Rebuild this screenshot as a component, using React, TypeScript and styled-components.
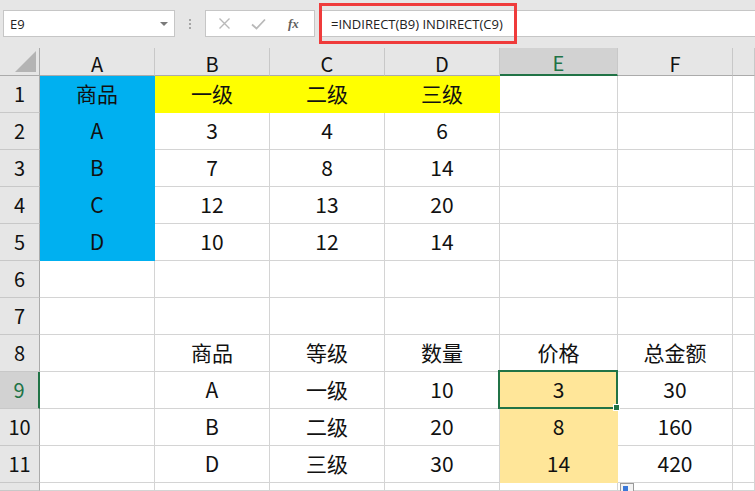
import React from 'react'
import styled, { createGlobalStyle } from 'styled-components'

const GlobalStyle = createGlobalStyle`
  html, body {
    margin: 0;
    padding: 0;
    background: #e6e6e6;
    overflow: hidden;
  }
`

const green = '#217346'
const gridLine = '#d4d4d4'
const cellFont = `"Noto Sans CJK SC", "Liberation Sans", sans-serif`

const Page = styled.div`
  width: 755px;
  height: 491px;
  display: flex;
  flex-direction: column;
  background: #e6e6e6;
  font-family: ${cellFont};
  overflow: hidden;
`

const FormulaBar = styled.div`
  height: 48px;
  display: flex;
  align-items: flex-start;
  padding: 10px 0 0 3px;
  box-sizing: border-box;
`

const NameBox = styled.div`
  width: 172px;
  height: 27px;
  box-sizing: border-box;
  background: #fff;
  border: 1px solid #c6c6c6;
  display: flex;
  align-items: center;
  justify-content: space-between;
  padding: 0 6px 0 6px;
  font-family: "Open Sans", "Liberation Sans", sans-serif;
  font-size: 13px;
  color: #222;
`

const Caret = styled.span`
  width: 0;
  height: 0;
  border-left: 4px solid transparent;
  border-right: 4px solid transparent;
  border-top: 4px solid #7a7a7a;
`

const Grip = styled.div`
  width: 30px;
  height: 27px;
  display: flex;
  flex-direction: column;
  align-items: center;
  justify-content: center;
  gap: 2px;

  span {
    width: 2px;
    height: 2px;
    background: #a6a6a6;
  }
`

const ButtonBox = styled.div`
  width: 110px;
  height: 27px;
  box-sizing: border-box;
  background: #fff;
  border: 1px solid #c6c6c6;
  display: flex;
  align-items: center;
  padding: 0 10px 0 12px;
  gap: 20px;
`

const Fx = styled.span`
  font-family: "Liberation Serif", serif;
  font-style: italic;
  font-weight: bold;
  font-size: 13px;
  color: #5f5f5f;
  margin-left: 2px;
`

const FormulaInput = styled.div`
  flex: 1;
  margin-left: 4px;
  height: 27px;
  background: #fff;
  border-top: 1px solid #c6c6c6;
  border-bottom: 1px solid #c6c6c6;
  box-sizing: border-box;
  position: relative;
  display: flex;
  align-items: center;
  padding-left: 12px;
  font-family: "Open Sans", "Liberation Sans", sans-serif;
  font-size: 13px;
  color: #222;
`

const Highlight = styled.div`
  position: absolute;
  left: 0;
  top: -8px;
  width: 198px;
  height: 41px;
  box-sizing: border-box;
  border: 3px solid #ef3b3b;
`

const Sheet = styled.div`
  flex: 1;
  display: grid;
  grid-template-columns: 40px 115px 115px 115px 115px 118px 115px 1fr;
  grid-template-rows: 28px repeat(11, 37px) 1fr;
  background: #fff;
`

const Corner = styled.div`
  background: #e6e6e6;
  border-right: 1px solid #ababab;
  border-bottom: 1px solid #ababab;
  display: flex;
  align-items: flex-end;
  justify-content: flex-end;
  padding: 0 3px 3px 0;
`

const ColHead = styled.div<{ $active?: boolean }>`
  background: ${(p) => (p.$active ? '#d2d2d2' : '#e6e6e6')};
  border-right: 1px solid #c8c8c8;
  border-bottom: ${(p) => (p.$active ? `2px solid ${green}` : '1px solid #ababab')};
  color: ${(p) => (p.$active ? green : '#111')};
  font-size: 20px;
  display: flex;
  align-items: center;
  justify-content: center;
  padding-top: 3px;
  box-sizing: border-box;
`

const RowHead = styled.div<{ $active?: boolean }>`
  background: ${(p) => (p.$active ? '#d2d2d2' : '#e6e6e6')};
  border-right: ${(p) => (p.$active ? `2px solid ${green}` : '1px solid #ababab')};
  border-bottom: 1px solid #c8c8c8;
  color: ${(p) => (p.$active ? green : '#111')};
  font-size: 20px;
  display: flex;
  align-items: center;
  justify-content: center;
  padding-bottom: 1px;
  box-sizing: border-box;
`

const Cell = styled.div<{ $fill?: string }>`
  position: relative;
  background: ${(p) => p.$fill || '#fff'};
  border-right: 1px solid ${(p) => p.$fill || gridLine};
  border-bottom: 1px solid ${(p) => p.$fill || gridLine};
  font-size: 21px;
  color: #111;
  display: flex;
  align-items: center;
  justify-content: center;
  padding-bottom: 2px;
  box-sizing: border-box;
`

const Selection = styled.div`
  position: absolute;
  left: -2px;
  top: -2px;
  right: -1px;
  bottom: -1px;
  border: 2px solid ${green};
  pointer-events: none;
  z-index: 2;

  &::after {
    content: '';
    position: absolute;
    right: -4px;
    bottom: -4px;
    width: 5px;
    height: 5px;
    background: ${green};
    border: 1px solid #fff;
  }
`

const PasteIcon = styled.div`
  position: absolute;
  left: 2px;
  top: 37px;
  width: 12px;
  height: 10px;
  border: 1px solid #9a9a9a;
  background: #f3f3f3;
  z-index: 3;

  &::after {
    content: '';
    position: absolute;
    left: 2px;
    top: 2px;
    width: 5px;
    height: 8px;
    background: #3a78d8;
  }
`

const blue = '#00b0f0'
const yellow = '#ffff00'
const tan = '#ffe699'

type Row = { cells: (string | number)[]; fills?: (string | undefined)[] }

const rows: Row[] = [
  { cells: ['商品', '一级', '二级', '三级', '', '', ''], fills: [blue, yellow, yellow, yellow] },
  { cells: ['A', 3, 4, 6, '', '', ''], fills: [blue] },
  { cells: ['B', 7, 8, 14, '', '', ''], fills: [blue] },
  { cells: ['C', 12, 13, 20, '', '', ''], fills: [blue] },
  { cells: ['D', 10, 12, 14, '', '', ''], fills: [blue] },
  { cells: ['', '', '', '', '', '', ''] },
  { cells: ['', '', '', '', '', '', ''] },
  { cells: ['', '商品', '等级', '数量', '价格', '总金额', ''] },
  { cells: ['', 'A', '一级', 10, 3, 30, ''], fills: [undefined, undefined, undefined, undefined, tan] },
  { cells: ['', 'B', '二级', 20, 8, 160, ''], fills: [undefined, undefined, undefined, undefined, tan] },
  { cells: ['', 'D', '三级', 30, 14, 420, ''], fills: [undefined, undefined, undefined, undefined, tan] },
]

const columns = ['A', 'B', 'C', 'D', 'E', 'F', '']

const CloseIcon = () => (
  <svg width="13" height="13" viewBox="0 0 13 13">
    <path d="M1.5 1.5 L11.5 11.5 M11.5 1.5 L1.5 11.5" stroke="#b9b9b9" strokeWidth="1.4" fill="none" />
  </svg>
)

const CheckIcon = () => (
  <svg width="15" height="12" viewBox="0 0 15 12">
    <path d="M1 6.5 L5.5 10.5 L14 1.5" stroke="#b9b9b9" strokeWidth="1.8" fill="none" />
  </svg>
)

const App: React.FC = () => {
  return (
    <Page>
      <GlobalStyle />
      <FormulaBar>
        <NameBox>
          E9
          <Caret />
        </NameBox>
        <Grip>
          <span />
          <span />
          <span />
        </Grip>
        <ButtonBox>
          <CloseIcon />
          <CheckIcon />
          <Fx>fx</Fx>
        </ButtonBox>
        <FormulaInput>
          <Highlight />
          =INDIRECT(B9) INDIRECT(C9)
        </FormulaInput>
      </FormulaBar>
      <Sheet>
        <Corner>
          <svg width="21" height="21" viewBox="0 0 21 21">
            <polygon points="21,0 21,21 0,21" fill="#b4b4b4" />
          </svg>
        </Corner>
        {columns.map((c, i) => (
          <ColHead key={i} $active={c === 'E'}>
            {c}
          </ColHead>
        ))}
        {rows.map((row, r) => (
          <React.Fragment key={r}>
            <RowHead $active={r === 8}>{r + 1}</RowHead>
            {row.cells.map((v, c) => (
              <Cell key={c} $fill={row.fills?.[c]}>
                {v}
                {r === 8 && c === 4 && <Selection />}
                {r === 10 && c === 5 && <PasteIcon />}
              </Cell>
            ))}
          </React.Fragment>
        ))}
        <RowHead />
        {columns.map((_, c) => (
          <Cell key={c} />
        ))}
      </Sheet>
    </Page>
  )
}

export default App
